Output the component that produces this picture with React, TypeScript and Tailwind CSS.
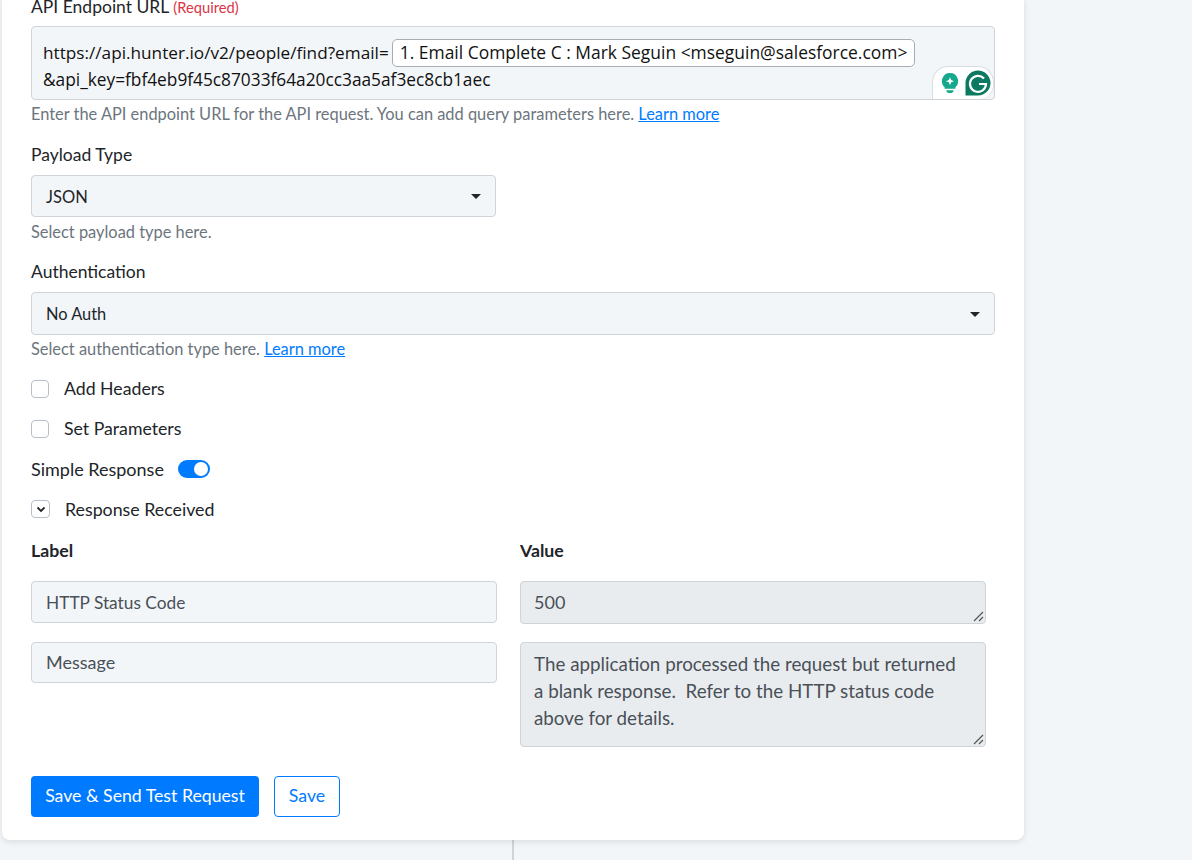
import React from "react";

function Help({ children }: { children: React.ReactNode }) {
  return <p className="m-0 text-[16.4px] leading-[22px] text-[#6c757d]">{children}</p>;
}

function Caret() {
  return <span className="absolute right-[14px] top-1/2 -mt-[2px] h-0 w-0 border-x-[5px] border-t-[5px] border-x-transparent border-t-[#212529]" />;
}

function Resize() {
  return (
    <svg className="absolute bottom-[1px] right-[1px]" width="11" height="11" viewBox="0 0 11 11">
      <path d="M1 10 L10 1 M6 10 L10 6" stroke="#555" strokeWidth="1.2" />
    </svg>
  );
}

function Check({ label }: { label: string }) {
  return (
    <div className="flex h-[20px] items-center">
      <span className="h-[18px] w-[18px] rounded-[4px] border border-[#b8bfc7] bg-white" />
      <span className="ml-[15px] pt-[1px] text-[17.7px] text-[#212529]">{label}</span>
    </div>
  );
}

export default function App() {
  return (
    <div className="relative h-[860px] w-[1192px] overflow-hidden bg-[#f3f6f9] font-['Lato',sans-serif] text-[#212529]">
      <div className="absolute bottom-0 left-[512px] h-[20px] w-[2px] bg-[#ced4da]" />
      <div className="absolute bottom-[20px] left-[2px] flex w-[1022px] flex-col rounded-[8px] bg-white pl-[29px] pr-[29px] pb-[23px] shadow-[0_2px_6px_rgba(0,0,0,0.1)]">
        <div className="mb-[6px] flex h-[26px] items-center">
          <span className="text-[17.5px]">API Endpoint URL</span>
          <span className="ml-[4px] text-[14.7px] text-[#dc3545]">(Required)</span>
        </div>
        <div className="relative h-[74px] rounded-[4px] border border-[#ced4da] bg-[#f3f6f9] pl-[11px] pt-[12px] font-['Open_Sans',sans-serif] text-[17.2px] leading-[27px] text-[#111]">
          <div className="flex h-[27px] items-center">
            <span>https://api.hunter.io/v2/people/find?email=</span>
            <span className="ml-[3px] flex h-[28px] items-center rounded-[5px] border border-[#a8adb3] bg-white px-[7px] text-[17.45px]">1. Email Complete C : Mark Seguin &lt;mseguin@salesforce.com&gt;</span>
          </div>
          <div className="h-[27px] text-[17.3px]">&amp;api_key=fbf4eb9f45c87033f64a20cc3aa5af3ec8cb1aec</div>
          <div className="absolute bottom-0 right-0 flex h-[33px] w-[62px] items-center justify-end gap-[6px] rounded-tl-[16px] rounded-tr-[16px] rounded-br-[14px] border border-b-0 border-[#d8dde2] bg-white pr-[2px]">
            <svg width="18" height="22" viewBox="0 0 20 24">
              <path d="M10 1a9 9 0 0 0-6 15.700V18.500h12v-1.800A9 9 0 0 0 10 1z" fill="#15a88c" />
              <path d="M6 20h8v1a2.500 2.500 0 0 1-2.500 2h-3A2.500 2.500 0 0 1 6 21z" fill="#15a88c" />
              <path d="M10 5.500l1.300 3.200 3.200 1.300-3.200 1.300-1.300 3.200-1.300-3.200-3.200-1.300 3.200-1.300z" fill="#fff" />
            </svg>
            <svg width="26" height="26" viewBox="0 0 26 26">
              <path d="M13 0.500a12.500 12.500 0 0 1 0 25H0.500V13A12.500 12.500 0 0 1 13 0.500z" fill="#0c7a63" />
              <path d="M19 8.500A8 8 0 1 0 21 14h-7" fill="none" stroke="#fff" strokeWidth="2.200" />
            </svg>
          </div>
        </div>
        <div className="mt-[3px]"><Help>Enter the API endpoint URL for the API request. You can add query parameters here. <a className="text-[#007bff] underline">Learn more</a></Help></div>

        <label className="mt-[17px] block h-[24px] text-[17.5px] leading-[26px]">Payload Type</label>
        <div className="relative mt-[9px] flex h-[42px] w-[465px] items-center rounded-[4px] border border-[#ced4da] bg-[#f3f6f9] pl-[14px] pt-[3px] text-[16.5px]">JSON<Caret /></div>
        <div className="mt-[4px]"><Help>Select payload type here.</Help></div>

        <label className="mt-[16px] block h-[24px] text-[17.5px] leading-[26px]">Authentication</label>
        <div className="relative mt-[9px] flex h-[43px] w-full items-center rounded-[4px] border border-[#ced4da] bg-[#f3f6f9] pl-[14px] pt-[2px] text-[16.4px]">No Auth<Caret /></div>
        <div className="mt-[3px]"><Help>Select authentication type here. <a className="text-[#007bff] underline">Learn more</a></Help></div>

        <div className="mt-[19px]"><Check label="Add Headers" /></div>
        <div className="mt-[20px]"><Check label="Set Parameters" /></div>
        <div className="mt-[20px] flex h-[20px] items-center">
          <span className="text-[18px]">Simple Response</span>
          <span className="ml-[14px] flex h-[18px] w-[32px] items-center justify-end rounded-full bg-[#007bff] pr-[2px]"><span className="h-[14px] w-[14px] rounded-full bg-white" /></span>
        </div>
        <div className="mt-[20px] flex h-[20px] items-center">
          <span className="flex h-[18px] w-[19px] items-center justify-center rounded-[4px] border border-[#b8bfc7] bg-white">
            <svg width="10" height="7" viewBox="0 0 10 7"><path d="M1.500 1.500 5 5l3.500-3.500" fill="none" stroke="#212529" strokeWidth="1.800" /></svg>
          </span>
          <span className="ml-[15px] text-[17.8px]">Response Received</span>
        </div>

        <div className="mt-[22px] flex h-[20px] items-center text-[17.7px] font-bold">
          <span className="w-[489px]">Label</span>
          <span>Value</span>
        </div>
        <div className="mt-[20px] flex">
          <div className="flex h-[42px] w-[466px] items-center rounded-[4px] border border-[#ced4da] bg-[#f3f6f9] pl-[14px] pt-[1px] text-[17.3px] text-[#495057]">HTTP Status Code</div>
          <div className="relative ml-[23px] flex h-[43px] w-[466px] items-center rounded-[4px] border border-[#ced4da] bg-[#e9ecef] pl-[13px] text-[18px] text-[#495057]">500<Resize /></div>
        </div>
        <div className="mt-[18px] flex items-start">
          <div className="flex h-[41px] w-[466px] items-center rounded-[4px] border border-[#ced4da] bg-[#f3f6f9] pl-[14px] text-[18px] text-[#495057]">Message</div>
          <div className="relative ml-[23px] h-[105px] w-[466px] rounded-[4px] border border-[#ced4da] bg-[#e9ecef] pl-[13px] pr-[24px] pt-[7px] text-[18.8px] leading-[27px] text-[#495057]">
            The application processed the request but returned a blank response.&nbsp; Refer to the HTTP status code above for details.<Resize />
          </div>
        </div>
        <div className="mt-[29px] flex gap-[15px]">
          <button className="h-[41px] w-[228px] rounded-[4px] bg-[#007bff] text-[17.7px] text-white">Save &amp; Send Test Request</button>
          <button className="h-[41px] w-[66px] rounded-[4px] border border-[#007bff] bg-white text-[17.7px] text-[#007bff]">Save</button>
        </div>
      </div>
    </div>
  );
}
